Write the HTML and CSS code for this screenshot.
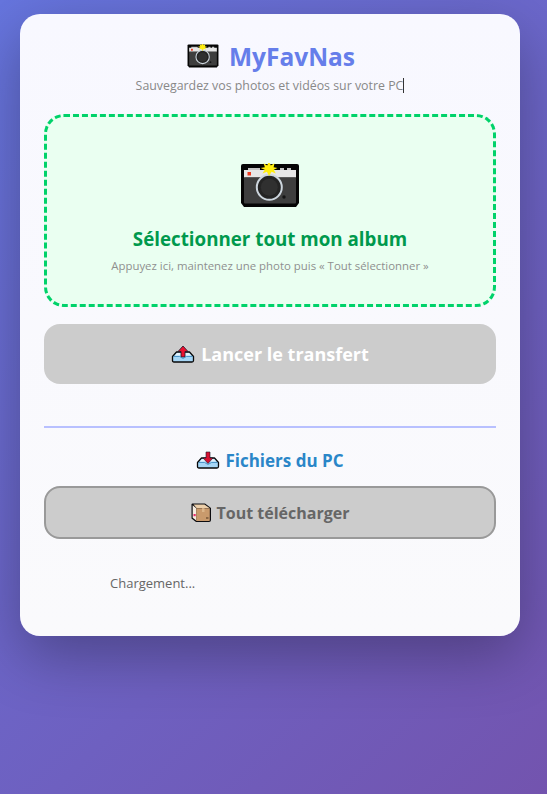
FILE: index.html
```html
<!DOCTYPE html>
<html lang="fr">
<head>
<meta charset="utf-8">
<title>MyFavNas</title>
<link rel="stylesheet" href="styles.css">
</head>
<body>
<svg class="defs" width="0" height="0" aria-hidden="true">
  <defs>
    <symbol id="camera" viewBox="0 0 60 45">
      <path d="M3 1H57Q59 1 59 3V40L56 44H4L1 40V3Q1 1 3 1Z" fill="#050505"/>
      <path d="M8 5H20V8H8ZM40 5H44V8H40ZM47 5H51V8H47Z" fill="#c4c4c4"/>
      <rect x="4" y="7" width="52" height="7.500" fill="#e6e6e6"/>
      <rect x="4" y="14.500" width="52" height="26" rx="1" fill="#3e3e3e"/>
      <rect x="7.500" y="9" width="3.500" height="3.500" fill="#ee3a1e"/>
      <circle cx="29.300" cy="24.300" r="12.500" fill="#242424" stroke="#cdd6de" stroke-width="2"/>
      <circle cx="29.300" cy="24.300" r="8.500" fill="#303030"/>
      <circle cx="44" cy="34" r="1.700" fill="#141414"/>
      <path d="M29 -2L30.800 2.500L34.500 .3L33.600 4.200L37.500 5L33.800 6.800L35.800 10.500L31.600 8.800L29 13L26.900 8.800L22.500 10.500L24.700 6.800L20.500 5L24.900 4.200L23.500 .3L27.200 2.500Z" fill="#ffee10"/>
    </symbol>
    <symbol id="tray-up" viewBox="0 0 24 18">
      <path d="M5.500 7H18.500L22.500 11.500V15.500Q22.500 17 21 17H3Q1.500 17 1.500 15.500V11.500Z" fill="#a6d6f6" stroke="#080808" stroke-width="1.300" stroke-linejoin="round"/>
      <path d="M6 8H18L20 10.500H4Z" fill="#e4f2fc"/>
      <path d="M12 1L17 6.500H14V12H10V6.500H7Z" fill="#ec1030" stroke="#1a1a2a" stroke-width=".8"/>
      <path d="M2.500 11.500H8.500L12 13.500L15.500 11.500H21.500" fill="none" stroke="#3a88c0" stroke-width=".8"/>
    </symbol>
    <symbol id="tray-down" viewBox="0 0 24 18">
      <path d="M5.500 7H18.500L22.500 11.500V15.500Q22.500 17 21 17H3Q1.500 17 1.500 15.500V11.500Z" fill="#a6d6f6" stroke="#080808" stroke-width="1.300" stroke-linejoin="round"/>
      <path d="M6 8H18L20 10.500H4Z" fill="#e4f2fc"/>
      <path d="M2.500 11.500H8.500L12 13.500L15.500 11.500H21.500" fill="none" stroke="#3a88c0" stroke-width=".8"/>
      <path d="M10 1H14V7H17L12 12.500L7 7H10Z" fill="#d81030" stroke="#1a1a2a" stroke-width=".6"/>
    </symbol>
    <symbol id="box" viewBox="0 0 20 19">
      <path d="M1.500 .5H14L20 5V17Q20 19 18 19H5L.5 15.500V1.500Q.5 .5 1.500 .5Z" fill="#0c0c10"/>
      <path d="M2.500 1.500H13.500L18.500 5H5.500Z" fill="#eccfaa"/>
      <path d="M1.700 2.200L5.200 5.200V17.500L1.700 14.800Z" fill="#f6ece0"/>
      <path d="M5.200 5.200H18.800V17.200Q18.800 18 18 18H5.200Z" fill="#c99a6c"/>
      <path d="M11 5.200H13.500V9H11Z" fill="#dcb68a"/>
      <rect x="2.500" y="11" width="2.200" height="2.200" fill="#ec2f6e"/>
      <rect x="15" y="14" width="2.500" height="2" fill="#8a6644"/>
    </symbol>
  </defs>
</svg>
<main class="card">
  <header class="head">
    <h1 class="title"><svg class="title-icon"><use href="#camera"/></svg><span>MyFavNas</span></h1>
    <p class="subtitle">Sauvegardez vos photos et vidéos sur votre PC<span class="caret"></span></p>
  </header>
  <section class="drop">
    <svg class="drop-icon"><use href="#camera"/></svg>
    <div class="drop-title">Sélectionner tout mon album</div>
    <div class="drop-hint">Appuyez ici, maintenez une photo puis « Tout sélectionner »</div>
  </section>
  <button class="send" type="button"><svg class="send-icon"><use href="#tray-up"/></svg>Lancer le transfert</button>
  <hr class="rule">
  <h2 class="files"><svg class="files-icon"><use href="#tray-down"/></svg>Fichiers du PC</h2>
  <button class="all" type="button"><svg class="all-icon"><use href="#box"/></svg>Tout télécharger</button>
  <p class="loading">Chargement...</p>
</main>
</body>
</html>
```

FILE: styles.css
```css
* { box-sizing: border-box; }
html { height: 100%; }
body {
  margin: 0;
  height: 794px;
  overflow: hidden;
  padding: 14px 27px 0 20px;
  background: linear-gradient(135deg, #6675de 0%, #764ba2 100%) 0 0 / 100% 1140px no-repeat;
  font-family: "Open Sans", "Noto Sans", sans-serif;
}
.defs { position: absolute; }
.card {
  height: 622px;
  padding: 24px;
  background: linear-gradient(180deg, #f8f8ff, #fafafc);
  border-radius: 20px;
  box-shadow: 0 20px 60px rgba(0, 0, 0, 0.3);
}
.head { text-align: center; height: 76px; }
.title {
  margin: 0;
  height: 36px;
  padding-left: 2px;
  display: flex;
  justify-content: center;
  align-items: center;
  gap: 10px;
  color: #667eea;
  font-size: 24.500px;
  font-weight: 700;
}
.title-icon { width: 32px; height: 24px; }
.subtitle {
  margin: 3px 0 0;
  color: #888;
  font-size: 12.370px;
  line-height: 18px;
}
.caret {
  display: inline-block;
  width: 1px;
  height: 15px;
  background: #333;
  vertical-align: -3px;
}
.drop {
  height: 193px;
  padding-top: 46px;
  border: 3px dashed #00d26a;
  border-radius: 20px;
  background: #eafff1;
  text-align: center;
}
.drop-icon { display: block; width: 60px; height: 45px; margin: 0 auto; }
.drop-title {
  margin-top: 18px;
  color: #00994d;
  font-size: 18.750px;
  font-weight: 700;
  line-height: 26px;
}
.drop-hint {
  margin-top: 6px;
  color: #8f8f8f;
  font-size: 11.400px;
  line-height: 15px;
}
.send, .all {
  display: flex;
  justify-content: center;
  align-items: center;
  width: 100%;
  font-family: inherit;
  font-weight: 700;
  background: #ccc;
}
.send {
  height: 60px;
  margin-top: 17px;
  gap: 6px;
  border: 0;
  border-radius: 16px;
  color: #fff;
  font-size: 18px;
}
.send-icon, .files-icon { width: 24px; height: 18px; }
.rule {
  height: 2px;
  margin: 42px 0 0;
  border: 0;
  background: #b8c0ff;
}
.files {
  height: 24px;
  margin: 20px 0 0;
  display: flex;
  justify-content: center;
  align-items: center;
  gap: 5px;
  color: #2a86c8;
  font-size: 17px;
  font-weight: 700;
}
.all {
  height: 53px;
  margin-top: 14px;
  gap: 6px;
  border: 2px solid #999;
  border-radius: 16px;
  color: #666;
  font-size: 16px;
}
.all-icon { width: 20px; height: 19px; }
.loading {
  margin: 35px 0 0 66px;
  color: #666;
  font-size: 13px;
  line-height: 18px;
}
```
